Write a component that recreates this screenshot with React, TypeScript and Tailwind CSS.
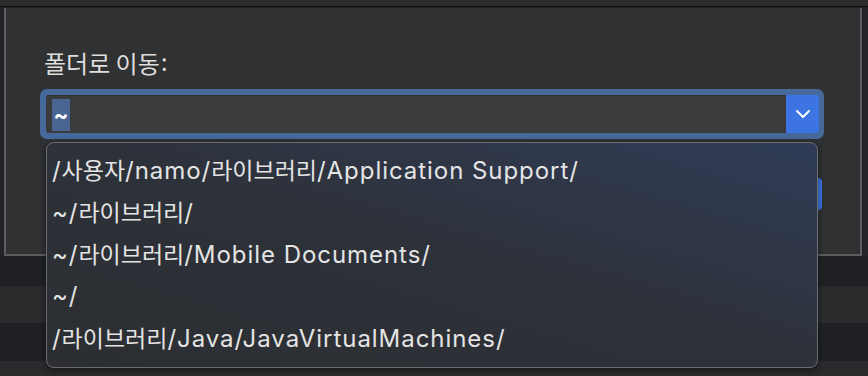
import { ChevronDown } from "lucide-react";

const recent = [
  "/사용자/namo/라이브러리/Application Support/",
  "~/라이브러리/",
  "~/라이브러리/Mobile Documents/",
  "~/",
  "/라이브러리/Java/JavaVirtualMachines/",
];

const latin = { fontFamily: 'Inter, "Noto Sans CJK KR", sans-serif' };
const hangul = { fontFamily: '"Noto Sans CJK KR", sans-serif' };

// Hangul runs use the CJK face, Latin runs Inter with a little tracking
function PathText({ text }: { text: string }) {
  const parts = text.split(/([\uAC00-\uD7A3]+)/).filter(Boolean);
  return (
    <span className="whitespace-pre">
      {parts.map((p, i) =>
        /[\uAC00-\uD7A3]/.test(p) ? (
          <span key={i} className="text-[23px]" style={hangul}>
            {p}
          </span>
        ) : (
          <span key={i} className="text-[24px] tracking-[0.95px]" style={latin}>
            {p}
          </span>
        )
      )}
    </span>
  );
}

export default function App() {
  return (
    <div
      className="relative w-[868px] h-[376px] overflow-hidden bg-[#232427] text-[#e2e2e2]"
      style={latin}
    >
      {/* window backdrop */}
      <div className="flex flex-col">
        <div className="h-[7px] bg-[#2b2c2e] border-b border-[#101011]" />
        <div className="h-[248px]" />
        <div className="h-[31px] bg-[#1f2124]" />
        <div className="h-[37px] bg-[#2a2b2d]" />
        <div className="h-[38px] bg-[#1f2124]" />
        <div className="h-[15px] bg-[#2a2b2d]" />
      </div>

      {/* sheet */}
      <div className="absolute left-[4px] top-[8px] w-[858px] h-[248px] bg-[#303133] border-l-[2px] border-r-[2px] border-b-[2px] border-[#5c5d5f]">
        <div className="flex flex-col pl-[34px] pt-[42px]">
          <div className="ml-[4px] h-[26px] flex items-center text-[#dedede]">
            <span className="text-[24px] leading-none" style={hangul}>폴더로 이동</span>
            <span className="text-[24px] leading-none ml-[1px]" style={latin}>:</span>
          </div>
          <div className="mt-[13px] w-[784px] h-[50px] rounded-[7px] bg-[#44699a] p-[6px] pr-[5px]">
            <div className="flex h-full rounded-[3px] overflow-hidden">
              <div className="flex-1 flex items-center bg-[#3a3b3d] border-t border-[#2c2d2f] pl-[6px]">
                <span className="flex items-center justify-center w-[18px] h-[32px] bg-[#4a6594] text-white text-[22px] font-bold leading-none">
                  ~
                </span>
              </div>
              <div className="w-[33px] flex items-center justify-center bg-[#3c74e4] rounded-r-[3px]">
                <ChevronDown className="w-[24px] h-[24px] text-white" strokeWidth={2} />
              </div>
            </div>
          </div>
        </div>
        {/* button peeking behind the popup */}
        <div className="absolute left-[780px] top-[170px] w-[36px] h-[32px] rounded-[4px] bg-[#3c74e4]" />
      </div>

      {/* recent folders popup */}
      <div className="absolute left-[46px] top-[142px] w-[772px] h-[226px] rounded-[8px] border border-[#6b6d70] bg-linear-to-bl from-[#303c57] via-[#2d3139] to-[#2c2e31] pt-[6px] pl-[5px] shadow-[0_2px_6px_rgba(0,0,0,0.5)]">
        {recent.map((path) => (
          <div key={path} className="h-[42px] flex items-center leading-none text-[#e4e4e4]">
            <PathText text={path} />
          </div>
        ))}
      </div>
    </div>
  );
}
